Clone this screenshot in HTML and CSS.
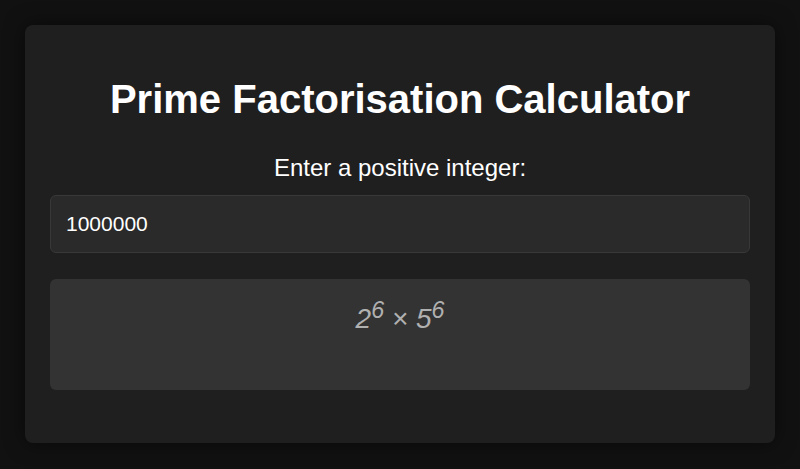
FILE: index.html
```html
<!DOCTYPE html>
<html>
<head>
<meta charset="utf-8">
<link rel="stylesheet" href="styles.css">
</head>
<body>
<main class="card">
  <h1 class="title">Prime Factorisation Calculator</h1>
  <label class="label" for="num">Enter a positive integer:</label>
  <input class="input" id="num" type="text" value="1000000">
  <div class="result">2<sup>6</sup> × 5<sup>6</sup></div>
</main>
</body>
</html>
```

FILE: styles.css
```css
html, body {
  margin: 0;
  height: 100%;
}
body {
  background: #111111;
  font-family: "Liberation Sans", Arial, sans-serif;
  color: #ffffff;
  padding: 25px;
  box-sizing: border-box;
}
.card {
  background: #1f1f1f;
  border-radius: 8px;
  box-shadow: 0 0 20px rgba(0, 0, 0, 0.5);
  padding: 51px 25px 53px;
  display: flex;
  flex-direction: column;
  align-items: stretch;
  text-align: center;
}
.title {
  margin: 0;
  font-size: 40px;
  font-weight: bold;
  line-height: 46px;
}
.label {
  margin-top: 32px;
  font-size: 24px;
  line-height: 28px;
}
.input {
  margin-top: 13px;
  height: 58px;
  box-sizing: border-box;
  background: #2a2a2a;
  border: 1px solid #383838;
  border-radius: 6px;
  padding: 0 15px;
  color: #ffffff;
  font-family: "Liberation Sans", Arial, sans-serif;
  font-size: 21px;
  outline: none;
}
.result {
  margin-top: 26px;
  height: 111px;
  box-sizing: border-box;
  background: #333333;
  border-radius: 6px;
  padding-top: 24px;
  color: #b0b0b0;
  font-size: 28px;
  font-style: italic;
  line-height: 32px;
}
.result sup {
  font-size: 0.83em;
  line-height: 0;
}
```
